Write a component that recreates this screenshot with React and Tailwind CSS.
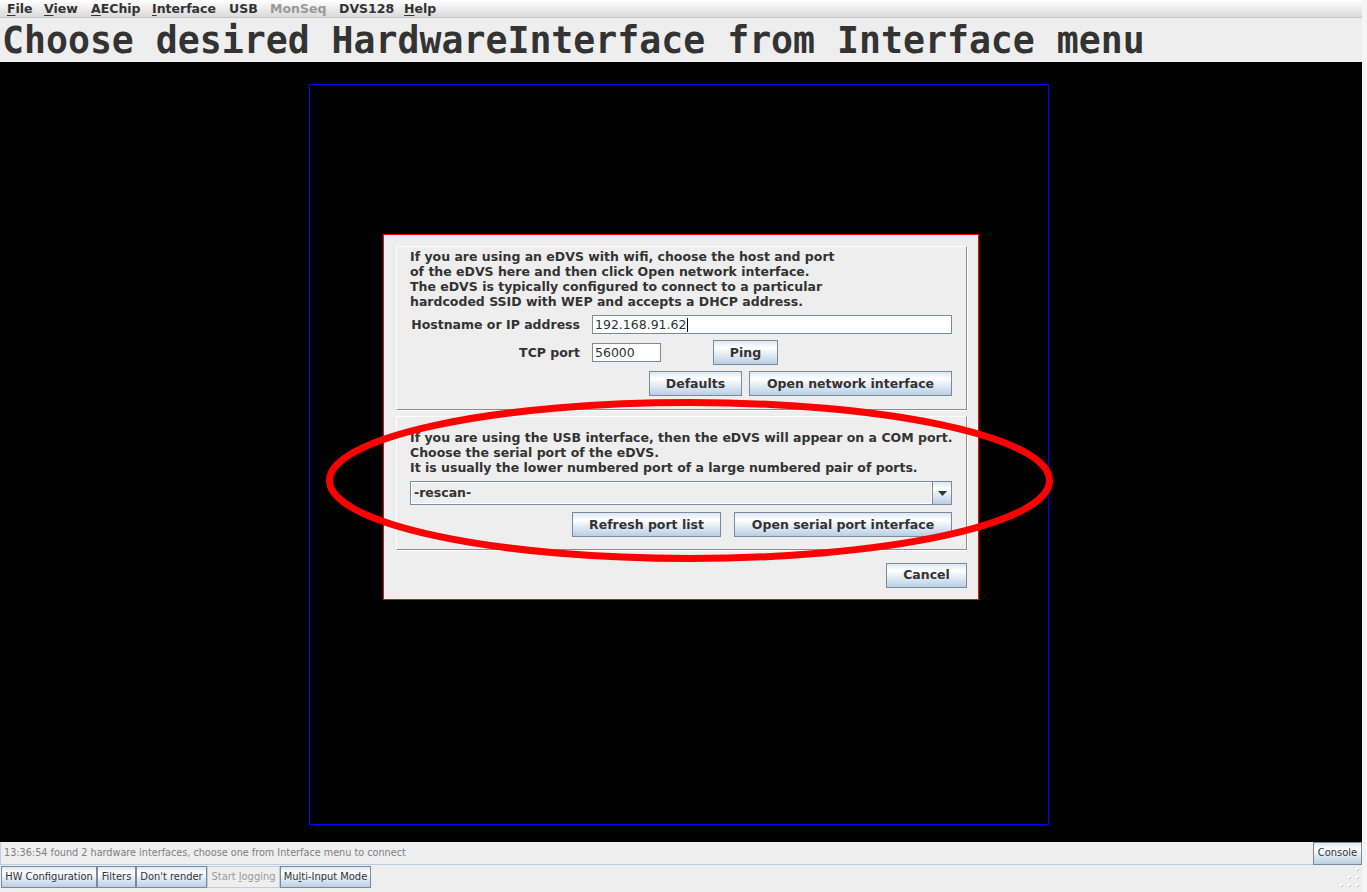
import React from "react";

const btnBg = "bg-[linear-gradient(to_bottom,#dde8f3,#ffffff_30%,#b8cfe5)]";

function Btn({ children, className = "" }) {
  return (
    <div className={`flex items-center justify-center border border-[#7a8a99] ${btnBg} text-[12.5px] font-bold text-[#333333] whitespace-nowrap ${className}`}>
      {children}
    </div>
  );
}

function SmallBtn({ children, className = "", disabled = false }) {
  return (
    <div
      className={`flex items-center justify-center border text-[11px] [font-stretch:condensed] whitespace-nowrap ${
        disabled ? "border-[#b8cfe5] bg-[#eeeeee] text-[#999999]" : `border-[#7a8a99] ${btnBg} text-[#333333]`
      } ${className}`}
    >
      {children}
    </div>
  );
}

function Etched({ children, className = "" }) {
  return (
    <div className={`border border-t-white border-l-white border-r-[#8e8e8e] border-b-[#8e8e8e] shadow-[1px_1px_0_#ffffff] ${className}`}>
      {children}
    </div>
  );
}

const menus = [
  ["F", "ile", "w-[37px]"],
  ["V", "iew", "w-[47px]"],
  ["A", "EChip", "w-[61px]"],
  ["I", "nterface", "w-[77px]"],
  ["", "USB", "w-[41px]"],
  ["", "MonSeq", "w-[69px] text-[#999999]"],
  ["", "DVS128", "w-[65px]"],
  ["H", "elp", "w-[50px]"],
];

function ResizeGrip() {
  const dots = [
    [17, 0],
    [9, 8],
    [17, 8],
    [1, 16],
    [9, 16],
    [17, 16],
  ];
  return (
    <svg width="21" height="20" viewBox="0 0 21 20">
      {dots.map(([x, y]) => (
        <g key={`${x}-${y}`}>
          <rect x={x + 1} y={y + 1} width="2" height="2" fill="#c8c8c8" />
          <rect x={x} y={y} width="2" height="2" fill="#ffffff" />
        </g>
      ))}
    </svg>
  );
}

export default function App() {
  return (
    <div className="flex w-[1367px] h-[892px] overflow-hidden bg-[#f5f5f5] font-['DejaVu_Sans','Liberation_Sans',sans-serif] text-[#333333]">
      <div className="flex flex-col w-[1362px] h-full bg-[#eeeeee]">
        {/* menu bar */}
        <div className="flex items-start h-[18px] pl-[7px] pt-[1px] border-b border-[#c6c6c6] bg-linear-to-b from-white to-[#dadada] text-[12.5px] font-bold leading-[15px]">
          {menus.map(([mn, rest, cls]) => (
            <span key={mn + rest} className={`shrink-0 ${cls}`}>
              {mn && <span className="underline underline-offset-2">{mn}</span>}
              {rest}
            </span>
          ))}
        </div>

        {/* title */}
        <div className="h-[44px] pl-[2px] pt-[1px] font-['DejaVu_Sans_Mono','Liberation_Mono',monospace] text-[36.5px] font-bold leading-[43px] text-[#333333] whitespace-nowrap">
          Choose desired HardwareInterface from Interface menu
        </div>

        {/* canvas */}
        <div className="relative h-[780px] bg-black">
          <div className="absolute left-[309px] top-[22px] w-[740px] h-[741px] border border-[#0000ff]" />

          {/* dialog */}
          <div className="absolute left-[383px] top-[172px] w-[596px] h-[366px] border border-[#ff0000] bg-[#eeeeee] pl-[12px] pt-[11px]">
            <Etched className="w-[571px] h-[164px] pl-[13px] pt-[2px]">
              <div className="text-[12.5px] font-bold leading-[15px] whitespace-nowrap">
                <div>If you are using an eDVS with wifi, choose the host and port</div>
                <div>of the eDVS here and then click Open network interface.</div>
                <div>The eDVS is typically configured to connect to a particular</div>
                <div>hardcoded SSID with WEP and accepts a DHCP address.</div>
              </div>
              <div className="flex items-center h-[19px] mt-[6px]">
                <div className="w-[170px] pt-[1px] text-right text-[12.5px] font-bold whitespace-nowrap">Hostname or IP address</div>
                <div className="flex items-center ml-[12px] w-[360px] h-[19px] border border-[#7a8a99] bg-white pl-[2px] pt-[1px] text-[12.5px]">
                  192.168.91.62
                  <span className="ml-[1px] w-px h-[14px] bg-black" />
                </div>
              </div>
              <div className="flex items-center h-[25px] mt-[6px]">
                <div className="w-[170px] pt-[1px] text-right text-[12.5px] font-bold">TCP port</div>
                <div className="flex items-center ml-[12px] w-[69px] h-[19px] border border-[#7a8a99] bg-white pl-[2px] pt-[1px] text-[12.5px]">
                  56000
                </div>
                <Btn className="ml-[52px] w-[65px] h-[25px] pt-[1px]">Ping</Btn>
              </div>
              <div className="flex justify-end gap-[7px] h-[25px] mt-[6px] pr-[14px]">
                <Btn className="w-[93px] h-[25px] pt-[1px]">Defaults</Btn>
                <Btn className="w-[203px] h-[25px] pt-[1px]">Open network interface</Btn>
              </div>
            </Etched>

            <Etched className="mt-[6px] w-[571px] h-[134px] pl-[13px] pt-[13px]">
              <div className="text-[12.5px] font-bold leading-[15px] whitespace-nowrap">
                <div>If you are using the USB interface, then the eDVS will appear on a COM port.</div>
                <div>Choose the serial port of the eDVS.</div>
                <div>It is usually the lower numbered port of a large numbered pair of ports.</div>
              </div>
              <div className="flex mt-[6px] w-[542px] h-[24px] border border-[#7a8a99] bg-[#eeeeee]">
                <div className="flex-1 flex items-center pl-[2px] pt-[1px] border border-white text-[12.5px] font-bold">-rescan-</div>
                <div className={`flex items-center justify-center w-[19px] border-l border-[#7a8a99] ${btnBg}`}>
                  <svg width="9" height="5" viewBox="0 0 9 5">
                    <path d="M0 0h9L4.5 5z" fill="#333333" />
                  </svg>
                </div>
              </div>
              <div className="flex justify-end gap-[13px] h-[25px] mt-[7px] pr-[14px]">
                <Btn className="w-[149px] h-[25px] pt-[1px]">Refresh port list</Btn>
                <Btn className="w-[218px] h-[25px] pt-[1px]">Open serial port interface</Btn>
              </div>
            </Etched>

            <div className="flex justify-end w-[571px] mt-[13px]">
              <Btn className="w-[81px] h-[25px]">Cancel</Btn>
            </div>
          </div>

          {/* annotation ellipse */}
          <svg className="absolute left-0 top-0 pointer-events-none" width="1362" height="780">
            <ellipse cx="689.5" cy="418.5" rx="360" ry="78" fill="none" stroke="#ff0000" strokeWidth="7" />
          </svg>
        </div>

        {/* status */}
        <div className="flex h-[23px]">
          <div className="flex-1 flex items-center pl-[3px] border-l border-b border-[#b8cfe5] text-[10.75px] [font-stretch:condensed] text-[#808080] whitespace-nowrap">
            13:36:54 found 2 hardware interfaces, choose one from Interface menu to connect
          </div>
          <SmallBtn className="w-[49px] h-[23px]">Console</SmallBtn>
        </div>

        {/* toolbar */}
        <div className="flex items-start h-[27px] pt-[1px] pl-[1px]">
          <SmallBtn className="w-[96px] h-[22px]">HW Configuration</SmallBtn>
          <SmallBtn className="w-[39px] h-[22px]">Filters</SmallBtn>
          <SmallBtn className="w-[71px] h-[22px]">Don't render</SmallBtn>
          <SmallBtn className="w-[73px] h-[22px]" disabled>
            Start&nbsp;<span className="underline">l</span>ogging
          </SmallBtn>
          <SmallBtn className="w-[91px] h-[22px]">
            Mu<span className="underline">l</span>ti-Input Mode
          </SmallBtn>
          <div className="flex-1" />
          <div className="self-end mb-[4px] mr-[2px]">
            <ResizeGrip />
          </div>
        </div>
      </div>
      <div className="flex-1" />
    </div>
  );
}
